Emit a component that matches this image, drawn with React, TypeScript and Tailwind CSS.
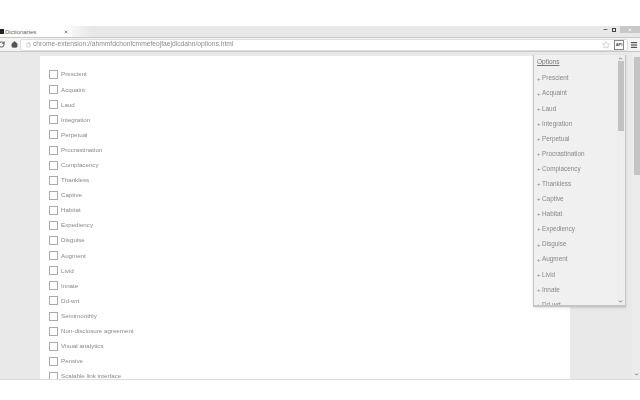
import React from 'react';
import { RotateCw, Home, File, Star, Menu, Minus, X, ChevronUp, ChevronDown } from 'lucide-react';

const words = [
  'Prescient', 'Acquaint', 'Laud', 'Integration', 'Perpetual', 'Procrastination', 'Complacency',
  'Thankless', 'Captive', 'Habitat', 'Expediency', 'Disguise', 'Augment', 'Livid', 'Innate', 'Dd-wrt',
  'Semimonthly', 'Non-disclosure agreement', 'Visual analytics', 'Pensive', 'Scalable link interface',
];

const menuWords = words.slice(0, 16);

export default function App() {
  return (
    <div className="h-[400px] w-[640px] overflow-hidden bg-white font-['Liberation_Sans',sans-serif] text-[#777] relative">
      <div className="h-[26px]" />

      {/* tab strip */}
      <div className="flex h-[11px] bg-[#e8e8e8]">
        <div className="flex h-[11px] w-[72px] items-center rounded-tr-[3px] bg-white text-[6px] leading-none">
          <span className="h-[5px] w-[4px] bg-[#222]" />
          <span className="ml-[1px] flex-1 text-[#666]">Dictionaries</span>
          <X className="mr-[4px] h-[4px] w-[4px] text-[#555]" strokeWidth={4} />
        </div>
        <div className="w-[18px] bg-gradient-to-r from-[#f6f6f6] to-[#e8e8e8]" />
        <div className="flex-1" />
        <div className="flex h-[7px] w-[37px] items-center">
          <Minus className="h-[5px] w-[5px] text-[#444]" strokeWidth={4} />
          <span className="ml-[4px] h-[4px] w-[4px] border border-[#444]" />
          <div className="ml-[4px] flex h-[7px] flex-1 items-center justify-center bg-[#c8c8c8]">
            <X className="h-[4px] w-[4px] text-white" strokeWidth={4} />
          </div>
        </div>
      </div>

      {/* toolbar */}
      <div className="flex h-[15px] items-center border-b border-t border-[#c8c8c8] bg-[#f4f4f4]">
        <RotateCw className="ml-[-2px] h-[7px] w-[7px] text-[#444]" strokeWidth={3} />
        <Home className="ml-[6px] h-[7px] w-[7px] fill-[#555] text-[#555]" strokeWidth={2} />
        <div className="ml-[2px] flex h-[12px] w-[608px] items-center rounded-[2px] border border-[#ddd] bg-white px-[3px]">
          <File className="ml-[2px] h-[6px] w-[5px] text-[#999]" strokeWidth={2} />
          <span className="ml-[2px] flex-1 truncate text-[6.7px] leading-none text-[#8a8a8a] will-change-transform">
            chrome-extension://ahmmfdchonfcmmefeojfaejdlcdahn/options.html
          </span>
          <Star className="mr-[4px] h-[8px] w-[8px] text-[#aaa]" strokeWidth={1.5} />
          <span className="flex h-[10px] w-[10px] items-center justify-center border border-[#888] text-[4px] font-bold text-[#444]">
            API
          </span>
        </div>
        <Menu className="ml-[2px] h-[8px] w-[8px] text-[#333]" strokeWidth={3} />
      </div>

      {/* page */}
      <div className="flex h-[328px] border-b border-[#dcdcdc] bg-[#e9e9e9]">
        <div className="ml-[40px] mt-[4px] w-[530px] overflow-hidden bg-white pl-[9px] pt-[11px]">
          <div className="will-change-transform">
            {words.map((w) => (
              <div key={w} className="flex h-[15.1px] items-center">
                <span className="h-[9px] w-[9px] shrink-0 border border-[#aaa]" />
                <span className="ml-[3px] text-[6.2px] leading-none text-[#888]">{w}</span>
              </div>
            ))}
          </div>
        </div>
        <div className="flex-1" />
        <div className="flex w-[8px] flex-col bg-[#ececec]">
          <div className="ml-[2px] mt-[5px] h-[118px] bg-[#c4c4c4]" />
          <div className="flex-1" />
          <ChevronDown className="mb-[2px] ml-[2px] h-[5px] w-[5px] text-[#666]" strokeWidth={4} />
        </div>
      </div>

      {/* options popup */}
      <div className="absolute left-[533px] top-[55px] flex h-[252px] w-[93px] overflow-hidden border-b-2 border-l border-r border-[#c4c4c4] bg-[#f0f0f0] shadow-sm">
        <div className="flex-1 overflow-hidden pl-[3px]">
          <div className="will-change-transform">
            <div className="h-[13px] text-[6.5px] leading-[13px] text-[#777] underline">Options</div>
            <div className="mt-[3px]">
              {menuWords.map((w) => (
                <div key={w} className="flex h-[15.1px] items-center text-[6.4px] leading-none text-[#888]">
                  <span className="w-[5px] text-[6px]">+</span>
                  <span>{w}</span>
                </div>
              ))}
            </div>
          </div>
        </div>
        <div className="flex w-[8px] flex-col bg-[#eeeeee] px-[1px]">
          <ChevronUp className="mt-[1px] h-[5px] w-[5px] text-[#666]" strokeWidth={4} />
          <div className="h-[70px] bg-[#c2c2c2]" />
          <div className="flex-1" />
          <ChevronDown className="mb-[1px] h-[5px] w-[5px] text-[#666]" strokeWidth={4} />
        </div>
      </div>
    </div>
  );
}
